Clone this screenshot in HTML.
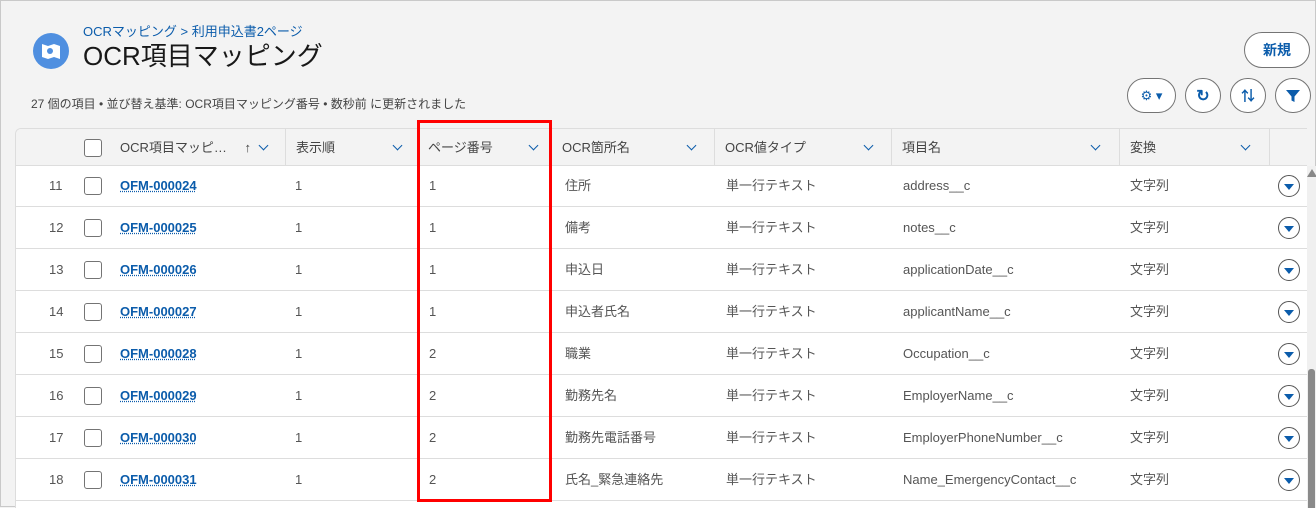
<!DOCTYPE html>
<html><head><meta charset="utf-8"><style>
*{box-sizing:border-box;margin:0;padding:0}
body{width:1316px;height:507px;overflow:hidden;background:#f3f3f3;font-family:"Liberation Sans","Noto Sans CJK JP",sans-serif;position:relative;border:1px solid #c9c9c9}
.abs{position:absolute}
.crumb{left:82px;top:20px;font-size:13px;color:#0b5cab}
.title{left:82px;top:37px;font-size:26px;color:#181818;line-height:36px}
.sub{left:30px;top:94px;font-size:12px;color:#444}
.icon{left:32px;top:32px;width:36px;height:36px;border-radius:50%;background:#4f8fe0}
.btn{border:1px solid #747474;border-radius:18px;background:#fff;display:flex;align-items:center;justify-content:center;color:#0b5cab}
.table{left:14px;top:127px;width:1292px;height:380px;background:#fff;border-top:1px solid #ddd;border-left:1px solid #ddd;border-radius:6px 0 0 0;overflow:hidden}
.hdr{position:absolute;left:0;top:0;width:100%;height:37px;background:#f3f3f3;border-bottom:1px solid #ddd}
.hc{position:absolute;top:0;height:37px;font-size:13px;color:#444;line-height:37px;border-right:1px solid #ddd;padding-left:10px}
.chev{position:absolute;top:13px;width:7px;height:7px;border-right:1.5px solid #0b5cab;border-bottom:1.5px solid #0b5cab;transform:rotate(45deg)}
.row{position:absolute;left:0;width:100%;height:42px;border-bottom:1px solid #ddd;font-size:13px;color:#555}
.row span{position:absolute;top:0;height:41px;line-height:41px}
.cb{position:absolute;width:18px;height:18px;border:1px solid #747474;border-radius:3px;background:#fff}
a{color:#0b5cab;font-weight:bold;text-decoration:underline dotted}
.dd{position:absolute;width:22px;height:22px;border:1px solid #555;border-radius:50%;background:#fff}
.dd:after{content:"";position:absolute;left:5px;top:8px;border-left:5px solid transparent;border-right:5px solid transparent;border-top:6px solid #0b5cab}
</style></head><body>
<div class="abs icon"><svg width="36" height="36" viewBox="0 0 36 36"><path d="M9 11l6 2 6-2 6 2v13l-6-2-6 2-6-2z" fill="#fff"/><circle cx="17" cy="18" r="3" fill="#4f8fe0"/></svg></div>
<div class="abs crumb">OCRマッピング &gt; 利用申込書2ページ</div>
<div class="abs title">OCR項目マッピング</div>
<div class="abs sub">27 個の項目 • 並び替え基準: OCR項目マッピング番号 • 数秒前 に更新されました</div>
<div class="abs btn" style="left:1243px;top:31px;width:66px;height:36px;font-weight:bold;font-size:14px">新規</div>
<div class="abs btn" style="left:1126px;top:77px;width:49px;height:35px;font-size:13px">⚙ ▾</div>
<div class="abs btn" style="left:1184px;top:77px;width:36px;height:35px;font-size:16px;font-weight:bold">↻</div>
<div class="abs btn" style="left:1229px;top:77px;width:36px;height:35px;font-size:14px;font-weight:bold">⇅</div>
<div class="abs btn" style="left:1274px;top:77px;width:36px;height:35px"><svg width="14" height="14" viewBox="0 0 14 14"><path d="M0 1h14L8.5 7.5V13l-3-1.5V7.5z" fill="#0b5cab"/></svg></div>
<div class="abs table">
<div class="hdr">
<div class="cb" style="left:68px;top:10px"></div>
<div class="hc" style="left:94px;width:176px">OCR項目マッピ… <b style="color:#444;margin-left:14px">↑</b><div class="chev" style="left:150px"></div></div>
<div class="hc" style="left:270px;width:132px">表示順<div class="chev" style="left:108px"></div></div>
<div class="hc" style="left:402px;width:134px">ページ番号<div class="chev" style="left:112px"></div></div>
<div class="hc" style="left:536px;width:163px">OCR箇所名<div class="chev" style="left:136px"></div></div>
<div class="hc" style="left:699px;width:177px">OCR値タイプ<div class="chev" style="left:150px"></div></div>
<div class="hc" style="left:876px;width:228px">項目名<div class="chev" style="left:200px"></div></div>
<div class="hc" style="left:1104px;width:150px">変換<div class="chev" style="left:122px"></div></div>
</div>
<div id="rows"></div>
</div>
<div class="abs" style="left:1306px;top:165px;width:10px;height:342px;background:#f0f0f0"></div>
<div class="abs" style="left:1307px;top:368px;width:7px;height:139px;background:#8a8a8a;border-radius:3px 3px 0 0"></div>
<div class="abs" style="left:1306px;top:168px;border-left:5px solid transparent;border-right:5px solid transparent;border-bottom:8px solid #888"></div>
<div class="abs" style="left:416px;top:119px;width:135px;height:382px;border:3px solid #f00"></div>
<script>
var d=[["11","24","1","住所","address__c"],["12","25","1","備考","notes__c"],["13","26","1","申込日","applicationDate__c"],["14","27","1","申込者氏名","applicantName__c"],["15","28","2","職業","Occupation__c"],["16","29","2","勤務先名","EmployerName__c"],["17","30","2","勤務先電話番号","EmployerPhoneNumber__c"],["18","31","2","氏名_緊急連絡先","Name_EmergencyContact__c"]];
var h="";d.forEach(function(r,i){var t=36+i*42;
h+='<div class="row" style="top:'+t+'px"><span style="left:33px">'+r[0]+'</span><div class="cb" style="left:68px;top:12px"></div><span style="left:104px"><a>OFM-0000'+r[1]+'</a></span><span style="left:279px">1</span><span style="left:413px">'+r[2]+'</span><span style="left:549px">'+r[3]+'</span><span style="left:710px">単一行テキスト</span><span style="left:887px">'+r[4]+'</span><span style="left:1114px">文字列</span><div class="dd" style="left:1262px;top:10px"></div></div>';});
document.getElementById("rows").innerHTML=h;
</script>
</body></html>
